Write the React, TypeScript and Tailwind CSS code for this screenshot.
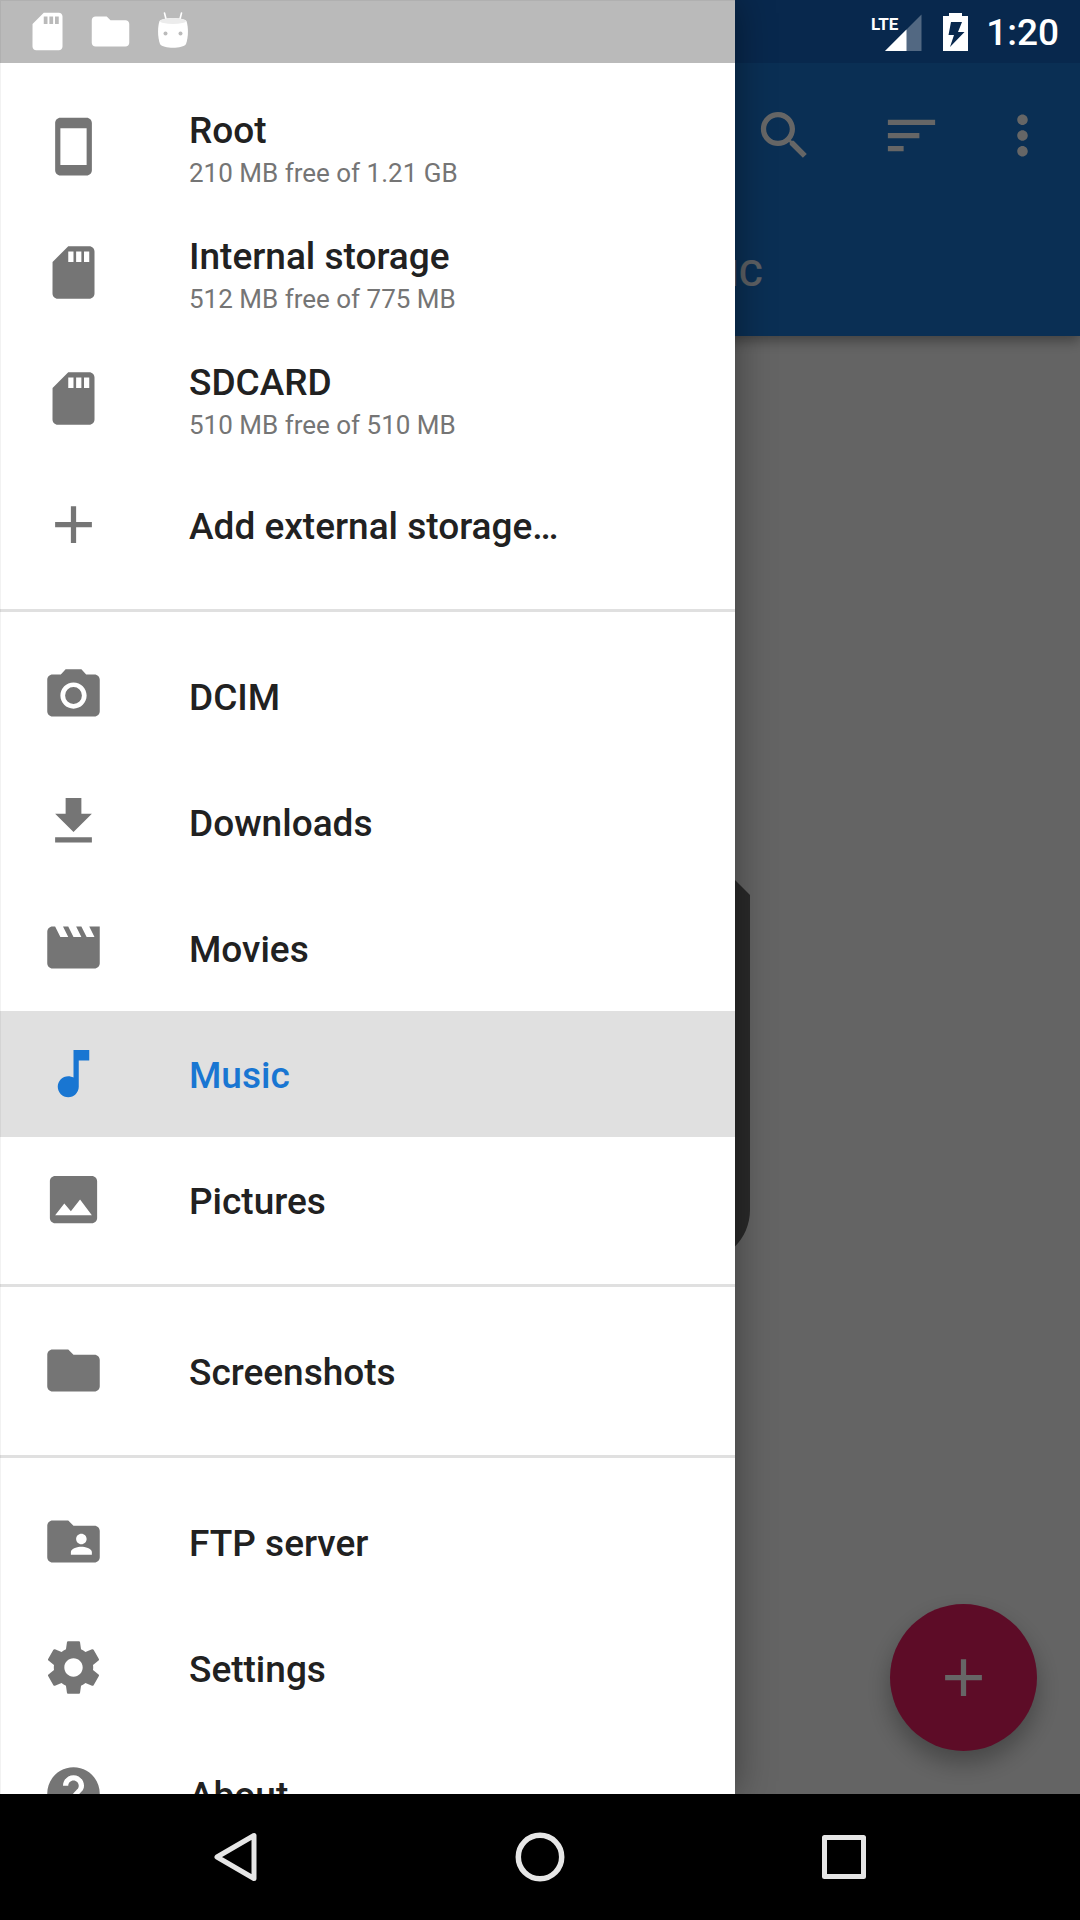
import type { ReactNode } from "react";

const paths = {
  phone:
    "M17 1.01L7 1c-1.1 0-1.99.9-1.99 2v18c0 1.1.89 2 1.99 2h10c1.1 0 2-.9 2-2V3c0-1.1-.9-1.99-2-1.99zM17 19H7V5h10v14z",
  sdCard:
    "M18 2h-8L4.02 8 4 20c0 1.1.9 2 2 2h12c1.1 0 2-.9 2-2V4c0-1.1-.9-2-2-2zm-6 6h-2V4h2v4zm3 0h-2V4h2v4zm3 0h-2V4h2v4z",
  add: "M19 13h-6v6h-2v-6H5v-2h6V5h2v6h6v2z",
  camera:
    "M9 2L7.17 4H4c-1.1 0-2 .9-2 2v12c0 1.1.9 2 2 2h16c1.1 0 2-.9 2-2V6c0-1.1-.9-2-2-2h-3.170L15 2H9zm3 15c-2.760 0-5-2.240-5-5s2.240-5 5-5 5 2.240 5 5-2.240 5-5 5zM12 8.800a3.200 3.200 0 1 0 0 6.400 3.200 3.200 0 1 0 0-6.400z",
  download: "M19 9h-4V3H9v6H5l7 7 7-7zM5 18v2h14v-2H5z",
  movie:
    "M18 4l2 4h-3l-2-4h-2l2 4h-3l-2-4H8l2 4H7L5 4H4c-1.1 0-1.99.9-1.99 2L2 18c0 1.1.9 2 2 2h16c1.1 0 2-.9 2-2V4h-4z",
  music: "M12 3v10.550c-.59-.34-1.270-.55-2-.55-2.210 0-4 1.790-4 4s1.790 4 4 4 4-1.790 4-4V7h4V3h-6z",
  image:
    "M21 19V5c0-1.100-.9-2-2-2H5c-1.100 0-2 .9-2 2v14c0 1.100.9 2 2 2h14c1.100 0 2-.9 2-2zM8.500 13.500l2.500 3.010L14.500 12l4.500 6H5l3.500-4.500z",
  folder:
    "M10 4H4c-1.100 0-1.990.9-1.990 2L2 18c0 1.100.9 2 2 2h16c1.100 0 2-.9 2-2V8c0-1.100-.9-2-2-2h-8l-2-2z",
  folderShared:
    "M20 6h-8l-2-2H4c-1.100 0-1.990.9-1.990 2L2 18c0 1.100.9 2 2 2h16c1.100 0 2-.9 2-2V8c0-1.100-.9-2-2-2zm-5 3c1.100 0 2 .9 2 2s-.9 2-2 2-2-.9-2-2 .9-2 2-2zm4 8h-8v-1c0-1.330 2.670-2 4-2s4 .67 4 2v1z",
  settings:
    "M19.43 12.98c.04-.32.07-.64.07-.98s-.03-.66-.07-.98l2.11-1.65c.19-.15.24-.42.12-.64l-2-3.46c-.12-.22-.39-.3-.61-.22l-2.49 1c-.52-.4-1.08-.73-1.69-.98l-.38-2.65C14.46 2.18 14.25 2 14 2h-4c-.25 0-.46.18-.49.42l-.38 2.65c-.61.25-1.17.59-1.69.98l-2.49-1c-.23-.09-.49 0-.61.22l-2 3.46c-.13.22-.07.49.12.64l2.11 1.65c-.04.32-.07.65-.07.98s.03.66.07.98l-2.11 1.65c-.19.15-.24.42-.12.64l2 3.46c.12.22.39.3.61.22l2.49-1c.52.4 1.08.73 1.69.98l.38 2.65c.03.24.24.42.49.42h4c.25 0 .46-.18.49-.42l.38-2.65c.61-.25 1.17-.59 1.69-.98l2.49 1c.23.09.49 0 .61-.22l2-3.46c.12-.22.07-.49-.12-.64l-2.11-1.65zM12 15.5c-1.93 0-3.5-1.57-3.5-3.5s1.57-3.5 3.5-3.5 3.5 1.57 3.5 3.5-1.57 3.5-3.5 3.5z",
  help: "M12 2C6.480 2 2 6.480 2 12s4.480 10 10 10 10-4.480 10-10S17.520 2 12 2zm1 17h-2v-2h2v2zm2.070-7.750l-.9.920C13.450 12.900 13 13.500 13 15h-2v-.5c0-1.100.45-2.100 1.170-2.830l1.240-1.260c.37-.36.590-.86.590-1.410 0-1.100-.9-2-2-2s-2 .9-2 2H8c0-2.210 1.790-4 4-4s4 1.790 4 4c0 .88-.36 1.680-.93 2.250z",
  search:
    "M15.500 14h-.79l-.28-.27C15.410 12.590 16 11.110 16 9.500 16 5.910 13.090 3 9.500 3S3 5.910 3 9.500 5.910 16 9.500 16c1.610 0 3.090-.59 4.230-1.570l.27.28v.79l5 4.990L20.490 19l-4.990-5zm-6 0C7.010 14 5 11.990 5 9.500S7.010 5 9.500 5 14 7.010 14 9.500 11.990 14 9.500 14z",
  sort: "M3 18h6v-2H3v2zM3 6v2h18V6H3zm0 7h12v-2H3v2z",
  more: "M12 8c1.100 0 2-.9 2-2s-.9-2-2-2-2 .9-2 2 .9 2 2 2zm0 2c-1.100 0-2 .9-2 2s.9 2 2 2 2-.9 2-2-.9-2-2-2zm0 6c-1.100 0-2 .9-2 2s.9 2 2 2 2-.9 2-2-.9-2-2-2z",
  file: "M14 2H6c-1.100 0-1.990.9-1.990 2L4 20c0 1.100.89 2 1.990 2H18c1.100 0 2-.9 2-2V8l-6-6z",
};

type IconName = keyof typeof paths;

function Icon({ name, className = "size-[63px]" }: { name: IconName; className?: string }) {
  return (
    <svg viewBox="0 0 24 24" fill="currentColor" aria-hidden="true" className={`shrink-0 ${className}`}>
      <path d={paths[name]} />
    </svg>
  );
}

type Item = { icon: IconName; label: string; detail?: string; active?: boolean };

const groups: Item[][] = [
  [
    { icon: "phone", label: "Root", detail: "210 MB free of 1.21 GB" },
    { icon: "sdCard", label: "Internal storage", detail: "512 MB free of 775 MB" },
    { icon: "sdCard", label: "SDCARD", detail: "510 MB free of 510 MB" },
    { icon: "add", label: "Add external storage…" },
  ],
  [
    { icon: "camera", label: "DCIM" },
    { icon: "download", label: "Downloads" },
    { icon: "movie", label: "Movies" },
    { icon: "music", label: "Music", active: true },
    { icon: "image", label: "Pictures" },
  ],
  [{ icon: "folder", label: "Screenshots" }],
  [
    { icon: "folderShared", label: "FTP server" },
    { icon: "settings", label: "Settings" },
    { icon: "help", label: "About" },
  ],
];

function DrawerItem({ icon, label, detail, active }: Item) {
  return (
    <li>
      <a
        href="#"
        aria-current={active ? "page" : undefined}
        className={`flex h-[126px] items-center gap-[84px] pl-[42px] ${
          active ? "bg-[#e0e0e0] text-[#1976d2]" : "text-[#757575]"
        }`}
      >
        <Icon name={icon} className="mb-[2px] size-[63px]" />
        <span className="flex flex-col pt-[4px]">
          <span className={`text-[37px] leading-[48px] font-medium ${active ? "" : "text-[#212121]"}`}>{label}</span>
          {detail && <span className="text-[26px] leading-[36px]">{detail}</span>}
        </span>
      </a>
    </li>
  );
}

function Drawer() {
  return (
    <nav
      aria-label="Locations"
      className="absolute inset-y-0 left-0 w-[735px] max-w-full overflow-hidden bg-white pt-[63px] shadow-[0_0_36px_rgba(0,0,0,0.4)] after:pointer-events-none after:absolute after:inset-0 after:border-t after:border-l after:border-black/5"
    >
      {groups.map((items, i) => (
        <ul key={i} className="border-b-[3px] border-[#e0e0e0] py-[21px]">
          {items.map((item) => (
            <DrawerItem key={item.label} {...item} />
          ))}
        </ul>
      ))}
    </nav>
  );
}

function ToolButton({ label, className, children }: { label: string; className: string; children: ReactNode }) {
  return (
    <button type="button" aria-label={label} className={`flex h-full items-center justify-center ${className}`}>
      {children}
    </button>
  );
}

function AppScreen() {
  return (
    <div className="flex h-full flex-col bg-[#fafafa]">
      <header className="relative bg-[#1976d2] text-white shadow-[0_5px_12px_rgba(0,0,0,0.35)]">
        <div className="h-[63px] bg-[#1565c0]" />
        <div className="flex h-[147px] items-center justify-end pr-[9px] pb-[2px]">
          <ToolButton label="Search" className="w-[128px]">
            <Icon name="search" />
          </ToolButton>
          <ToolButton label="Sort" className="w-[126px]">
            <Icon name="sort" />
          </ToolButton>
          <ToolButton label="More options" className="w-[97px]">
            <Icon name="more" />
          </ToolButton>
        </div>
        <div className="flex h-[126px] items-center justify-end pt-[2px] pr-[317px] text-[37px] font-medium text-white/90">
          MUSIC
        </div>
      </header>
      <main className="flex min-h-0 flex-1 flex-col items-center justify-center pb-[130px] text-[#696969]">
        <Icon name="file" className="size-[630px]" />
      </main>
      <button
        type="button"
        aria-label="Add"
        className="absolute right-[43px] bottom-[43px] flex size-[147px] items-center justify-center rounded-full bg-[#e91e63] text-white shadow-[0_12px_24px_rgba(0,0,0,0.3)]"
      >
        <Icon name="add" />
      </button>
    </div>
  );
}

function StatusBar() {
  return (
    <div className="absolute inset-x-0 top-0 flex h-[63px] items-center text-white">
      <div className="flex h-full w-[735px] items-center gap-[18px] bg-black/27 pl-[25px]">
        <Icon name="sdCard" className="size-[45px]" />
        <Icon name="folder" className="size-[45px]" />
        <svg viewBox="0 0 32 40" className="ml-[6px] h-[40px] w-[32px]" aria-hidden="true">
          <path d="M7.500 1L9.500 9M24.500 1L22.500 9" stroke="currentColor" strokeWidth="1.600" strokeLinecap="round" />
          <path
            d="M2.500 9C7 5 25 5 29.500 9C31.500 15 31.500 25 29 32C26 37 6 37 3 32C.5 25 .5 15 2.500 9z"
            fill="currentColor"
          />
          <ellipse cx="16" cy="9" rx="13" ry="3" fill="#ececec" />
          <circle cx="8.500" cy="21.500" r="2" fill="#bbb" />
          <circle cx="23.500" cy="21.500" r="2" fill="#bbb" />
        </svg>
      </div>
      <div className="flex flex-1 items-center justify-end pr-[21px]">
        <svg viewBox="0 0 48 40" className="h-[40px] w-[48px] overflow-visible" role="img" aria-label="LTE signal">
          <path d="M46.500 2.500V39H10z" fill="currentColor" fillOpacity="0.3" />
          <path d="M31.500 17.500V39H10z" fill="currentColor" />
          <text x="-4" y="18" fontSize="17" fontWeight="700" fill="currentColor">
            LTE
          </text>
        </svg>
        <svg viewBox="0 0 25 38" className="ml-[20px] h-[38px] w-[25px]" role="img" aria-label="Battery charging">
          <path
            fillRule="evenodd"
            fill="currentColor"
            d="M6 0H19V3H25V38H0V3H6zM8 9L5.500 22H11L7 34L21.500 19H15L19 9z"
          />
        </svg>
        <time className="ml-[18px] pt-[3px] text-[37px] leading-[44px] font-medium">1:20</time>
      </div>
    </div>
  );
}

function NavBar() {
  return (
    <footer className="flex h-[126px] shrink-0 bg-black px-[84px] text-[#e6e6e6]">
      <button type="button" aria-label="Back" className="flex flex-1 items-center justify-center">
        <svg viewBox="0 0 50 50" fill="none" stroke="currentColor" strokeWidth="5" strokeLinejoin="round" className="size-[50px]" aria-hidden="true">
          <path d="M43 3.500V46.500L6 25z" />
        </svg>
      </button>
      <button type="button" aria-label="Home" className="flex flex-1 items-center justify-center">
        <svg viewBox="0 0 50 50" fill="none" stroke="currentColor" strokeWidth="5.500" className="size-[50px]" aria-hidden="true">
          <circle cx="25" cy="25" r="21.700" />
        </svg>
      </button>
      <button type="button" aria-label="Recent apps" className="flex flex-1 items-center justify-center">
        <svg viewBox="0 0 50 50" fill="none" stroke="currentColor" strokeWidth="5" strokeLinejoin="round" className="size-[50px]" aria-hidden="true">
          <path d="M5.500 5.500H44.500V44.500H5.500z" />
        </svg>
      </button>
    </footer>
  );
}

export default function App() {
  return (
    <div className="flex h-screen flex-col overflow-hidden bg-black font-['Roboto',sans-serif]">
      <div className="relative min-h-0 flex-1 overflow-hidden">
        <AppScreen />
        <div className="absolute inset-0 bg-black/60" />
        <Drawer />
        <StatusBar />
      </div>
      <NavBar />
    </div>
  );
}
